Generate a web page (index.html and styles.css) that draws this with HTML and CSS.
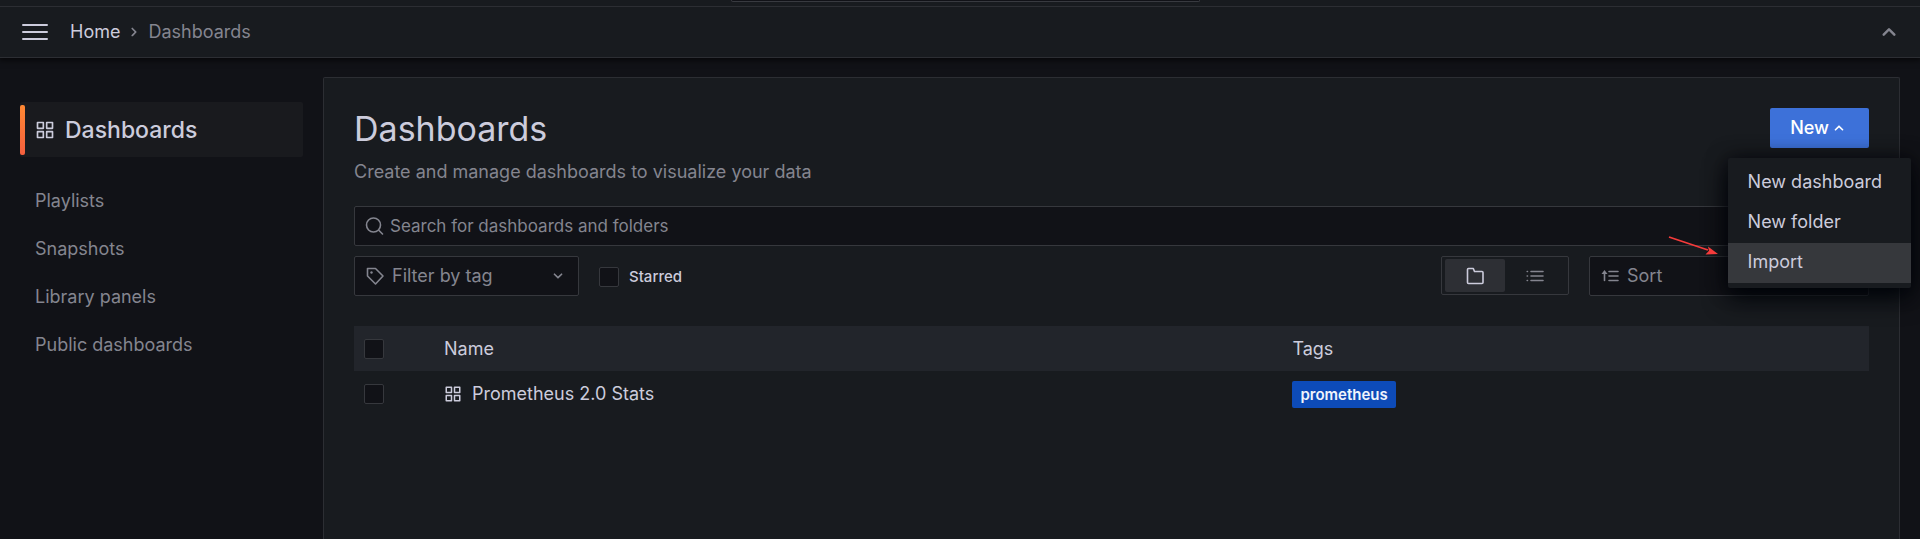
FILE: index.html
```html
<!DOCTYPE html>
<html lang="en">
<head>
<meta charset="utf-8">
<meta name="viewport" content="width=device-width, initial-scale=1">
<title>Dashboards</title>
<link rel="stylesheet" href="styles.css">
</head>
<body>
<svg class="sprite" aria-hidden="true">
  <symbol id="apps" viewBox="0 0 24 24"><path d="M10 13H3a1 1 0 0 0-1 1v7a1 1 0 0 0 1 1h7a1 1 0 0 0 1-1v-7a1 1 0 0 0-1-1zm-1 7H4v-5h5zM21 2h-7a1 1 0 0 0-1 1v7a1 1 0 0 0 1 1h7a1 1 0 0 0 1-1V3a1 1 0 0 0-1-1zm-1 7h-5V4h5zm1 4h-7a1 1 0 0 0-1 1v7a1 1 0 0 0 1 1h7a1 1 0 0 0 1-1v-7a1 1 0 0 0-1-1zm-1 7h-5v-5h5zM10 2H3a1 1 0 0 0-1 1v7a1 1 0 0 0 1 1h7a1 1 0 0 0 1-1V3a1 1 0 0 0-1-1zM9 9H4V4h5z"/></symbol>
  <symbol id="angle-up" viewBox="0 0 24 24"><path d="M17 13.41 12.71 9.17a1 1 0 0 0-1.42 0L7.05 13.41a1 1 0 0 0 0 1.42 1 1 0 0 0 1.41 0L12 11.29l3.54 3.54a1 1 0 0 0 .7.29 1 1 0 0 0 .71-.29 1 1 0 0 0 .05-1.42z"/></symbol>
  <symbol id="angle-down" viewBox="0 0 24 24"><path d="M17 9.17a1 1 0 0 0-1.41 0L12 12.71 8.46 9.17a1 1 0 0 0-1.41 0 1 1 0 0 0 0 1.42l4.24 4.24a1 1 0 0 0 1.42 0L17 10.59a1 1 0 0 0 0-1.42z"/></symbol>
  <symbol id="angle-right" viewBox="0 0 24 24"><path d="M14.83 11.29 10.59 7.05a1 1 0 0 0-1.42 0 1 1 0 0 0 0 1.41L12.71 12l-3.54 3.54a1 1 0 0 0 0 1.41 1 1 0 0 0 .71.29 1 1 0 0 0 .71-.29l4.24-4.24a1 1 0 0 0 0-1.42z"/></symbol>
</svg>

<div class="topbar"><div class="topbar-search"></div></div>
<header class="navbar">
  <button class="icon-button" type="button" aria-label="Open menu">
    <svg class="burger" viewBox="0 0 26 16"><path d="M1 1h24M1 8h24M1 15h24"/></svg>
  </button>
  <nav class="breadcrumbs" aria-label="Breadcrumbs">
    <a class="crumb" href="#">Home</a>
    <svg class="icon icon-sep"><use href="#angle-right"/></svg>
    <span class="crumb-current">Dashboards</span>
  </nav>
  <button class="icon-button collapse" type="button" aria-label="Hide search bar">
    <svg class="icon icon-collapse"><use href="#angle-up"/></svg>
  </button>
</header>

<div class="layout">
  <nav class="sidebar" aria-label="Section">
    <a class="section-link" href="#"><svg class="icon icon-20"><use href="#apps"/></svg>Dashboards</a>
    <a class="side-link" href="#">Playlists</a>
    <a class="side-link" href="#">Snapshots</a>
    <a class="side-link" href="#">Library panels</a>
    <a class="side-link" href="#">Public dashboards</a>
  </nav>

  <main class="page">
    <div class="page-head">
      <div>
        <h1 class="title">Dashboards</h1>
        <p class="subtitle">Create and manage dashboards to visualize your data</p>
      </div>
      <div class="new">
        <button class="new-button" type="button" aria-expanded="true">New<svg class="icon icon-20"><use href="#angle-up"/></svg></button>
        <div class="menu">
          <a class="menu-item" href="#">New dashboard</a>
          <a class="menu-item" href="#">New folder</a>
          <a class="menu-item active" href="#">Import</a>
          <svg class="arrow" viewBox="0 0 50 20"><path class="arrow-line" d="M1 1 40 14"/><path class="arrow-head" d="M50 18 37.500 18.500 41 14.700 40 10.500z"/></svg>
        </div>
      </div>
    </div>

    <div class="field">
      <svg class="icon icon-line" viewBox="0 0 20 20"><circle cx="8.500" cy="9" r="7"/><path d="m14 14.500 3.500 3.500"/></svg>
      <input class="search-input" type="text" aria-label="Search for dashboards and folders" placeholder="Search for dashboards and folders">
    </div>

    <div class="filters">
      <div class="field tag-filter">
        <svg class="icon icon-line" viewBox="0 0 20 20"><path d="M2.500 2.500h8l7.500 7.500-7.500 8-8-8z"/><circle class="dot" cx="6.500" cy="6.500" r="1.200"/></svg>
        <select class="select" aria-label="Filter by tag"><option>Filter by tag</option></select>
        <svg class="icon icon-20"><use href="#angle-down"/></svg>
      </div>
      <label class="starred"><input class="checkbox" type="checkbox">Starred</label>
      <div class="view-switch" role="radiogroup" aria-label="View">
        <label class="view"><input class="view-radio" type="radio" name="view" aria-label="Folders" checked>
          <svg class="icon-line icon-20" viewBox="0 0 20 20"><path d="M3.500 2.500h4.800l1.200 3h7.500a1 1 0 0 1 1 1v10a1 1 0 0 1-1 1h-13.500a1 1 0 0 1-1-1v-13a1 1 0 0 1 1-1z"/></svg></label>
        <label class="view"><input class="view-radio" type="radio" name="view" aria-label="List">
          <svg class="icon-line icon-20" viewBox="0 0 20 20"><path d="M6 5.500h12M6 10h12M6 14.500h12M2.200 5.500h.3M2.200 10h.3M2.200 14.500h.3"/></svg></label>
      </div>
      <div class="field sort">
        <svg class="icon icon-line" viewBox="0 0 20 20"><path d="M4.500 14.500V7M9 5.500h9M9 10h9M9 14.500h9"/><path class="dot" d="M4.500 4 7.500 8h-6z"/></svg>
        <select class="select" aria-label="Sort"><option>Sort</option></select>
      </div>
    </div>

    <table class="table">
      <colgroup><col class="col-check"><col class="col-name"><col></colgroup>
      <thead>
        <tr><th><input class="checkbox" type="checkbox" aria-label="Select all"></th><th>Name</th><th>Tags</th></tr>
      </thead>
      <tbody>
        <tr>
          <td><input class="checkbox" type="checkbox" aria-label="Select Prometheus 2.0 Stats"></td>
          <td><a class="name" href="#"><svg class="icon icon-18"><use href="#apps"/></svg>Prometheus 2.0 Stats</a></td>
          <td><a class="tag" href="#">prometheus</a></td>
        </tr>
      </tbody>
    </table>
  </main>
</div>
</body>
</html>
```
FILE: styles.css
```css
* { box-sizing: border-box; }

body {
  margin: 0;
  min-height: 100vh;
  display: flex;
  flex-direction: column;
  background: #111217;
  color: #ccccdc;
  font: 400 18px/28px Inter, "Liberation Sans", sans-serif;
}

a { color: inherit; text-decoration: none; }
button, input, select { font: inherit; color: inherit; }

.sprite { position: absolute; width: 0; height: 0; }
.icon { flex: none; width: 20px; height: 20px; fill: currentColor; }
.icon-18 { width: 18px; height: 18px; }
.icon-20 { width: 20px; height: 20px; }
.icon-line { fill: none; stroke: currentColor; stroke-width: 1.6; stroke-linejoin: round; stroke-linecap: round; }
.dot { fill: currentColor; stroke: none; }

.topbar {
  position: relative;
  z-index: 1;
  height: 7px;
  padding: 0 720px 4px 731px;
  background: #181b1f;
  border-bottom: 1px solid #2c2e33;
}
.topbar-search {
  height: 2px;
  background: #111217;
  border: 1px solid #383a40;
  border-top: 0;
  border-radius: 0 0 2px 2px;
}

.navbar {
  position: relative;
  height: 51px;
  display: flex;
  align-items: center;
  padding: 0 16px 0 22px;
  background: #181b1f;
  border-bottom: 1px solid #2c2e33;
  box-shadow: 0 1px 6px 1px #000000b0;
}
.icon-button {
  display: flex;
  padding: 0;
  border: 0;
  background: none;
}
.burger { width: 26px; height: 16px; fill: none; stroke: #ccccdc; stroke-width: 2; stroke-linecap: round; }
.breadcrumbs { display: flex; align-items: center; gap: 4px; padding-left: 22px; }
.icon-sep, .crumb-current { color: #84858f; }
.collapse { margin-left: auto; color: #84858f; }
.icon-collapse { width: 30px; height: 30px; }

.layout { flex: 1; display: flex; }
.sidebar { width: 323px; padding: 44px 20px 0; color: #84858f; }
.section-link {
  position: relative;
  display: flex;
  align-items: center;
  gap: 10px;
  height: 55px;
  margin-bottom: 20px;
  padding-left: 15px;
  border-radius: 2px;
  background: #191a1e;
  color: #ccccdc;
  font-size: 23px;
  font-weight: 500;
}
.section-link::before {
  content: "";
  position: absolute;
  left: 0;
  top: 3px;
  bottom: 2px;
  width: 5px;
  border-radius: 2px;
  background: linear-gradient(#ff8833, #f55f3e);
}
.side-link { display: block; padding: 10px 15px; }

.page {
  flex: 1;
  margin: 19px 20px 0 0;
  padding: 30px;
  background: #181b1f;
  border: 1px solid #2c2e33;
  border-bottom: 0;
  border-radius: 2px 2px 0 0;
}
.page-head { display: flex; justify-content: space-between; align-items: flex-start; margin-bottom: 20px; }
.title { margin: 0 0 8px; font-size: 34px; line-height: 42px; font-weight: 400; }
.subtitle { margin: 0; color: #84858f; }

.new { position: relative; }
.new-button {
  display: flex;
  align-items: center;
  height: 40px;
  padding: 0 20px;
  border: 0;
  border-radius: 2px;
  background: #3d71d9;
  color: #fff;
  font-weight: 500;
}
.menu {
  position: absolute;
  z-index: 1;
  top: 50px;
  right: -42px;
  padding: 5px 0;
  border-radius: 2px;
  background: #181b1f;
  box-shadow: 0 10px 25px #010409, 0 0 20px #01040999;
  white-space: nowrap;
}
.menu-item { display: block; padding: 5px 29px 7px 20px; }
.menu-item.active { background: #36383c; }
.arrow { position: absolute; right: calc(100% + 10px); top: 78px; width: 50px; height: 20px; }
.arrow-line { fill: none; stroke: #f63b3b; stroke-width: 1.8; }
.arrow-head { fill: #f63b3b; }

.field {
  display: flex;
  align-items: center;
  height: 40px;
  padding: 0 10px;
  border: 1px solid #36383d;
  border-radius: 2px;
  background: #111217;
  color: #84858f;
}
.search-input { flex: 1; min-width: 0; padding: 0 5px; border: 0; background: none; outline: 0; font-size: 17px; }
.search-input::placeholder { color: inherit; opacity: 1; }
.select { flex: 1; min-width: 0; padding: 0 7px; border: 0; background: none; appearance: none; }

.filters { display: flex; align-items: flex-start; margin: 10px 0 30px; }
.tag-filter { width: 225px; }
.starred { display: flex; align-items: center; gap: 10px; margin: 7px 0 0 20px; font-size: 15px; font-weight: 500; }
.checkbox {
  display: block;
  width: 20px;
  height: 20px;
  margin: 0;
  appearance: none;
  border: 1px solid #36383d;
  border-radius: 2px;
  background: #111217;
}
.view-switch { display: flex; height: 39px; margin-left: auto; padding: 2px 3px; border: 1px solid #36383d; border-radius: 2px; }
.view { position: relative; display: flex; align-items: center; justify-content: center; width: 60px; border-radius: 2px; color: #84858f; }
.view-radio { position: absolute; inset: 0; width: 100%; height: 100%; margin: 0; opacity: 0; }
.view:has(:checked) { background: #2d2f34; color: #ccccdc; }
.sort { width: 280px; margin-left: 20px; }

.table { width: 100%; table-layout: fixed; border-collapse: collapse; text-align: left; }
.col-check { width: 90px; }
.col-name { width: 56%; }
.table tr { height: 45px; }
.table th, .table td { padding: 0; font-weight: 400; vertical-align: middle; }
.table thead { background: #22252b; }
.table .checkbox { margin-left: 10px; }
.name { display: flex; align-items: center; gap: 10px; }
.tag {
  display: inline-block;
  padding: 0 8px;
  border-radius: 2px;
  background: #0d4bb8;
  color: #f0f4fc;
  font-size: 15px;
  line-height: 27px;
  font-weight: 600;
  vertical-align: middle;
}
```
